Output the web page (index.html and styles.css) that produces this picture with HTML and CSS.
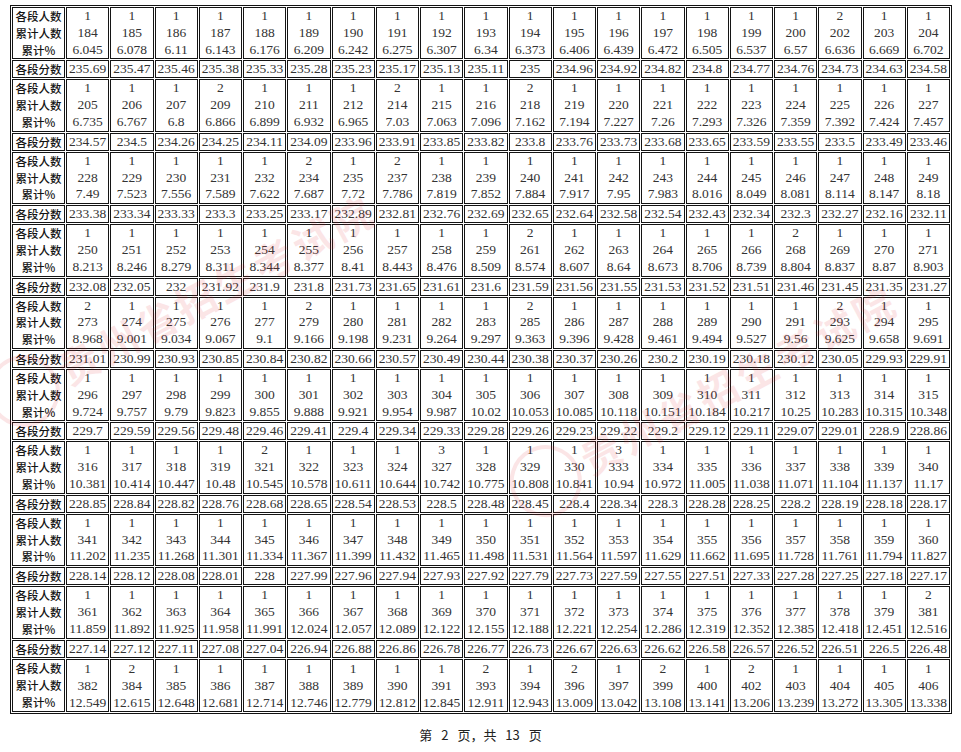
FILE: index.html
```html
<!DOCTYPE html>
<html lang="zh-CN">
<head>
<meta charset="utf-8">
<title>第 2 页</title>
<link rel="stylesheet" href="styles.css">
</head>
<body>
<div class="page">
<table class="grid">
<colgroup><col class="c-lbl"><col span="20"></colgroup>
<tbody>
<tr class="blk"><th>各段人数<br>累计人数<br>累计%</th><td>1<br>184<br>6.045</td><td>1<br>185<br>6.078</td><td>1<br>186<br>6.11</td><td>1<br>187<br>6.143</td><td>1<br>188<br>6.176</td><td>1<br>189<br>6.209</td><td>1<br>190<br>6.242</td><td>1<br>191<br>6.275</td><td>1<br>192<br>6.307</td><td>1<br>193<br>6.34</td><td>1<br>194<br>6.373</td><td>1<br>195<br>6.406</td><td>1<br>196<br>6.439</td><td>1<br>197<br>6.472</td><td>1<br>198<br>6.505</td><td>1<br>199<br>6.537</td><td>1<br>200<br>6.57</td><td>2<br>202<br>6.636</td><td>1<br>203<br>6.669</td><td>1<br>204<br>6.702</td></tr>
<tr class="sc"><th>各段分数</th><td>235.69</td><td>235.47</td><td>235.46</td><td>235.38</td><td>235.33</td><td>235.28</td><td>235.23</td><td>235.17</td><td>235.13</td><td>235.11</td><td>235</td><td>234.96</td><td>234.92</td><td>234.82</td><td>234.8</td><td>234.77</td><td>234.76</td><td>234.73</td><td>234.63</td><td>234.58</td></tr>
<tr class="blk"><th>各段人数<br>累计人数<br>累计%</th><td>1<br>205<br>6.735</td><td>1<br>206<br>6.767</td><td>1<br>207<br>6.8</td><td>2<br>209<br>6.866</td><td>1<br>210<br>6.899</td><td>1<br>211<br>6.932</td><td>1<br>212<br>6.965</td><td>2<br>214<br>7.03</td><td>1<br>215<br>7.063</td><td>1<br>216<br>7.096</td><td>2<br>218<br>7.162</td><td>1<br>219<br>7.194</td><td>1<br>220<br>7.227</td><td>1<br>221<br>7.26</td><td>1<br>222<br>7.293</td><td>1<br>223<br>7.326</td><td>1<br>224<br>7.359</td><td>1<br>225<br>7.392</td><td>1<br>226<br>7.424</td><td>1<br>227<br>7.457</td></tr>
<tr class="sc"><th>各段分数</th><td>234.57</td><td>234.5</td><td>234.26</td><td>234.25</td><td>234.11</td><td>234.09</td><td>233.96</td><td>233.91</td><td>233.85</td><td>233.82</td><td>233.8</td><td>233.76</td><td>233.73</td><td>233.68</td><td>233.65</td><td>233.59</td><td>233.55</td><td>233.5</td><td>233.49</td><td>233.46</td></tr>
<tr class="blk"><th>各段人数<br>累计人数<br>累计%</th><td>1<br>228<br>7.49</td><td>1<br>229<br>7.523</td><td>1<br>230<br>7.556</td><td>1<br>231<br>7.589</td><td>1<br>232<br>7.622</td><td>2<br>234<br>7.687</td><td>1<br>235<br>7.72</td><td>2<br>237<br>7.786</td><td>1<br>238<br>7.819</td><td>1<br>239<br>7.852</td><td>1<br>240<br>7.884</td><td>1<br>241<br>7.917</td><td>1<br>242<br>7.95</td><td>1<br>243<br>7.983</td><td>1<br>244<br>8.016</td><td>1<br>245<br>8.049</td><td>1<br>246<br>8.081</td><td>1<br>247<br>8.114</td><td>1<br>248<br>8.147</td><td>1<br>249<br>8.18</td></tr>
<tr class="sc"><th>各段分数</th><td>233.38</td><td>233.34</td><td>233.33</td><td>233.3</td><td>233.25</td><td>233.17</td><td>232.89</td><td>232.81</td><td>232.76</td><td>232.69</td><td>232.65</td><td>232.64</td><td>232.58</td><td>232.54</td><td>232.43</td><td>232.34</td><td>232.3</td><td>232.27</td><td>232.16</td><td>232.11</td></tr>
<tr class="blk"><th>各段人数<br>累计人数<br>累计%</th><td>1<br>250<br>8.213</td><td>1<br>251<br>8.246</td><td>1<br>252<br>8.279</td><td>1<br>253<br>8.311</td><td>1<br>254<br>8.344</td><td>1<br>255<br>8.377</td><td>1<br>256<br>8.41</td><td>1<br>257<br>8.443</td><td>1<br>258<br>8.476</td><td>1<br>259<br>8.509</td><td>2<br>261<br>8.574</td><td>1<br>262<br>8.607</td><td>1<br>263<br>8.64</td><td>1<br>264<br>8.673</td><td>1<br>265<br>8.706</td><td>1<br>266<br>8.739</td><td>2<br>268<br>8.804</td><td>1<br>269<br>8.837</td><td>1<br>270<br>8.87</td><td>1<br>271<br>8.903</td></tr>
<tr class="sc"><th>各段分数</th><td>232.08</td><td>232.05</td><td>232</td><td>231.92</td><td>231.9</td><td>231.8</td><td>231.73</td><td>231.65</td><td>231.61</td><td>231.6</td><td>231.59</td><td>231.56</td><td>231.55</td><td>231.53</td><td>231.52</td><td>231.51</td><td>231.46</td><td>231.45</td><td>231.35</td><td>231.27</td></tr>
<tr class="blk"><th>各段人数<br>累计人数<br>累计%</th><td>2<br>273<br>8.968</td><td>1<br>274<br>9.001</td><td>1<br>275<br>9.034</td><td>1<br>276<br>9.067</td><td>1<br>277<br>9.1</td><td>2<br>279<br>9.166</td><td>1<br>280<br>9.198</td><td>1<br>281<br>9.231</td><td>1<br>282<br>9.264</td><td>1<br>283<br>9.297</td><td>2<br>285<br>9.363</td><td>1<br>286<br>9.396</td><td>1<br>287<br>9.428</td><td>1<br>288<br>9.461</td><td>1<br>289<br>9.494</td><td>1<br>290<br>9.527</td><td>1<br>291<br>9.56</td><td>2<br>293<br>9.625</td><td>1<br>294<br>9.658</td><td>1<br>295<br>9.691</td></tr>
<tr class="sc"><th>各段分数</th><td>231.01</td><td>230.99</td><td>230.93</td><td>230.85</td><td>230.84</td><td>230.82</td><td>230.66</td><td>230.57</td><td>230.49</td><td>230.44</td><td>230.38</td><td>230.37</td><td>230.26</td><td>230.2</td><td>230.19</td><td>230.18</td><td>230.12</td><td>230.05</td><td>229.93</td><td>229.91</td></tr>
<tr class="blk"><th>各段人数<br>累计人数<br>累计%</th><td>1<br>296<br>9.724</td><td>1<br>297<br>9.757</td><td>1<br>298<br>9.79</td><td>1<br>299<br>9.823</td><td>1<br>300<br>9.855</td><td>1<br>301<br>9.888</td><td>1<br>302<br>9.921</td><td>1<br>303<br>9.954</td><td>1<br>304<br>9.987</td><td>1<br>305<br>10.02</td><td>1<br>306<br>10.053</td><td>1<br>307<br>10.085</td><td>1<br>308<br>10.118</td><td>1<br>309<br>10.151</td><td>1<br>310<br>10.184</td><td>1<br>311<br>10.217</td><td>1<br>312<br>10.25</td><td>1<br>313<br>10.283</td><td>1<br>314<br>10.315</td><td>1<br>315<br>10.348</td></tr>
<tr class="sc"><th>各段分数</th><td>229.7</td><td>229.59</td><td>229.56</td><td>229.48</td><td>229.46</td><td>229.41</td><td>229.4</td><td>229.34</td><td>229.33</td><td>229.28</td><td>229.26</td><td>229.23</td><td>229.22</td><td>229.2</td><td>229.12</td><td>229.11</td><td>229.07</td><td>229.01</td><td>228.9</td><td>228.86</td></tr>
<tr class="blk"><th>各段人数<br>累计人数<br>累计%</th><td>1<br>316<br>10.381</td><td>1<br>317<br>10.414</td><td>1<br>318<br>10.447</td><td>1<br>319<br>10.48</td><td>2<br>321<br>10.545</td><td>1<br>322<br>10.578</td><td>1<br>323<br>10.611</td><td>1<br>324<br>10.644</td><td>3<br>327<br>10.742</td><td>1<br>328<br>10.775</td><td>1<br>329<br>10.808</td><td>1<br>330<br>10.841</td><td>3<br>333<br>10.94</td><td>1<br>334<br>10.972</td><td>1<br>335<br>11.005</td><td>1<br>336<br>11.038</td><td>1<br>337<br>11.071</td><td>1<br>338<br>11.104</td><td>1<br>339<br>11.137</td><td>1<br>340<br>11.17</td></tr>
<tr class="sc"><th>各段分数</th><td>228.85</td><td>228.84</td><td>228.82</td><td>228.76</td><td>228.68</td><td>228.65</td><td>228.54</td><td>228.53</td><td>228.5</td><td>228.48</td><td>228.45</td><td>228.4</td><td>228.34</td><td>228.3</td><td>228.28</td><td>228.25</td><td>228.2</td><td>228.19</td><td>228.18</td><td>228.17</td></tr>
<tr class="blk"><th>各段人数<br>累计人数<br>累计%</th><td>1<br>341<br>11.202</td><td>1<br>342<br>11.235</td><td>1<br>343<br>11.268</td><td>1<br>344<br>11.301</td><td>1<br>345<br>11.334</td><td>1<br>346<br>11.367</td><td>1<br>347<br>11.399</td><td>1<br>348<br>11.432</td><td>1<br>349<br>11.465</td><td>1<br>350<br>11.498</td><td>1<br>351<br>11.531</td><td>1<br>352<br>11.564</td><td>1<br>353<br>11.597</td><td>1<br>354<br>11.629</td><td>1<br>355<br>11.662</td><td>1<br>356<br>11.695</td><td>1<br>357<br>11.728</td><td>1<br>358<br>11.761</td><td>1<br>359<br>11.794</td><td>1<br>360<br>11.827</td></tr>
<tr class="sc"><th>各段分数</th><td>228.14</td><td>228.12</td><td>228.08</td><td>228.01</td><td>228</td><td>227.99</td><td>227.96</td><td>227.94</td><td>227.93</td><td>227.92</td><td>227.79</td><td>227.73</td><td>227.59</td><td>227.55</td><td>227.51</td><td>227.33</td><td>227.28</td><td>227.25</td><td>227.18</td><td>227.17</td></tr>
<tr class="blk"><th>各段人数<br>累计人数<br>累计%</th><td>1<br>361<br>11.859</td><td>1<br>362<br>11.892</td><td>1<br>363<br>11.925</td><td>1<br>364<br>11.958</td><td>1<br>365<br>11.991</td><td>1<br>366<br>12.024</td><td>1<br>367<br>12.057</td><td>1<br>368<br>12.089</td><td>1<br>369<br>12.122</td><td>1<br>370<br>12.155</td><td>1<br>371<br>12.188</td><td>1<br>372<br>12.221</td><td>1<br>373<br>12.254</td><td>1<br>374<br>12.286</td><td>1<br>375<br>12.319</td><td>1<br>376<br>12.352</td><td>1<br>377<br>12.385</td><td>1<br>378<br>12.418</td><td>1<br>379<br>12.451</td><td>2<br>381<br>12.516</td></tr>
<tr class="sc"><th>各段分数</th><td>227.14</td><td>227.12</td><td>227.11</td><td>227.08</td><td>227.04</td><td>226.94</td><td>226.88</td><td>226.86</td><td>226.78</td><td>226.77</td><td>226.73</td><td>226.67</td><td>226.63</td><td>226.62</td><td>226.58</td><td>226.57</td><td>226.52</td><td>226.51</td><td>226.5</td><td>226.48</td></tr>
<tr class="blk last"><th>各段人数<br>累计人数<br>累计%</th><td>1<br>382<br>12.549</td><td>2<br>384<br>12.615</td><td>1<br>385<br>12.648</td><td>1<br>386<br>12.681</td><td>1<br>387<br>12.714</td><td>1<br>388<br>12.746</td><td>1<br>389<br>12.779</td><td>1<br>390<br>12.812</td><td>1<br>391<br>12.845</td><td>2<br>393<br>12.911</td><td>1<br>394<br>12.943</td><td>2<br>396<br>13.009</td><td>1<br>397<br>13.042</td><td>2<br>399<br>13.108</td><td>1<br>400<br>13.141</td><td>2<br>402<br>13.206</td><td>1<br>403<br>13.239</td><td>1<br>404<br>13.272</td><td>1<br>405<br>13.305</td><td>1<br>406<br>13.338</td></tr>
</tbody>
</table>
<p class="foot">第 2 页，共 13 页</p>
<div class="wm wm-left" aria-hidden="true"><span class="wm-ring"></span><span class="wm-text">贵州省招生考试院</span></div>
<div class="wm wm-right" aria-hidden="true"><span class="wm-ring"></span><span class="wm-text">贵州省招生考试院</span></div>
</div>
</body>
</html>
```

FILE: styles.css
```css
html, body {
  margin: 0;
  padding: 0;
  background: #ffffff;
}

body {
  font-family: "Liberation Serif", "Noto Sans CJK SC", serif;
  color: #2a2a2a;
}

.page {
  position: relative;
  width: 961px;
  height: 752px;
  overflow: hidden;
  padding: 5px 0 0 10px;
  box-sizing: border-box;
}

.grid {
  width: 942px;
  table-layout: fixed;
  border-collapse: separate;
  border-spacing: 1px;
  border: 1px solid #111;
  background: #ffffff;
}

.c-lbl {
  width: 53px;
}

.grid td,
.grid th {
  border: 1px solid #141414;
  padding: 0;
  text-align: center;
  vertical-align: middle;
  font-weight: normal;
  white-space: nowrap;
  overflow: hidden;
}

.grid td {
  font-family: "Liberation Serif", serif;
  font-size: 13.5px;
  color: #333333;
}

.grid th {
  font-family: "Noto Sans CJK SC", sans-serif;
  font-size: 11.5px;
  font-weight: 500;
  color: #141414;
}

.blk td,
.blk th {
  line-height: 16.8px;
}

.last td,
.last th {
  line-height: 17px;
}

.sc td,
.sc th {
  line-height: 16px;
}

.foot {
  margin: 12px 0 0;
  padding-right: 10px;
  text-align: center;
  font-family: "Noto Sans CJK SC", sans-serif;
  font-size: 13px;
  line-height: 18px;
  word-spacing: 6px;
  color: #222;
}

.wm {
  position: absolute;
  display: flex;
  align-items: center;
  gap: 6px;
  transform-origin: left center;
  transform: rotate(-28deg);
  pointer-events: none;
  opacity: 0.12;
}

.wm-left {
  left: -8px;
  top: 372px;
}

.wm-right {
  left: 514px;
  top: 462px;
}

.wm-ring {
  display: block;
  width: 72px;
  height: 72px;
  border: 4px solid #e0303a;
  border-radius: 50%;
  box-sizing: border-box;
}

.wm-text {
  font-family: "Noto Sans CJK SC", sans-serif;
  font-size: 40px;
  font-weight: bold;
  letter-spacing: 4px;
  color: #e0303a;
  white-space: nowrap;
}
```
